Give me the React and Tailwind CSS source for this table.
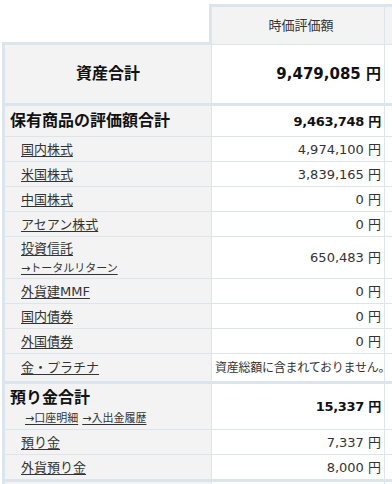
import React from "react";

const B = "border-[#dde5ec]";

function Row({ h, thick, left, right, leftClass = "", rightClass = "" }) {
  return (
    <div
      className={`flex ${h} ${thick ? "border-b-[3px]" : "border-b"} ${B}`}
    >
      <div className={`w-[206px] shrink-0 bg-[#f3f3f3] flex ${leftClass}`}>{left}</div>
      <div className={`w-[173px] shrink-0 border-l ${B} flex ${rightClass}`}>{right}</div>
      <div className={`w-[100px] shrink-0 border-l ${B}`}></div>
    </div>
  );
}

function Item({ label, value, h = "h-[25px]", thick }) {
  return (
    <Row
      h={h}
      thick={thick}
      leftClass="items-center pl-[16px]"
      rightClass="items-center justify-end pr-[3px]"
      left={<span className="text-[13px] text-[#333] underline underline-offset-2">{label}</span>}
      right={<span className="text-[13px] text-[#333]">{value}</span>}
    />
  );
}

export default function App() {
  return (
    <div className="w-[392px] h-[484px] overflow-hidden bg-white font-['DejaVu_Sans','Noto_Sans_CJK_JP',sans-serif] leading-none">
      <div className="w-[600px]">
        {/* header */}
        <div className="flex h-[45px]">
          <div className={`ml-[2px] w-[207px] h-[45px] border-b-[3px] ${B}`}></div>
          <div
            className={`mt-[4px] w-[175px] h-[41px] border-t-[3px] border-l-[3px] border-b ${B} bg-[#f3f3f3] flex items-center justify-center`}
          >
            <span className="text-[13px] text-[#333] pl-[6px]">時価評価額</span>
          </div>
          <div className={`mt-[4px] w-[100px] h-[41px] border-t-[3px] border-l border-b ${B} bg-[#f3f3f3]`}></div>
        </div>

        {/* body */}
        <div className={`ml-[2px] border-l-[3px] ${B}`}>
          <Row
            h="h-[61px]"
            thick
            leftClass="items-center justify-center"
            rightClass="items-center justify-end pr-[3px]"
            left={<span className="text-[16px] font-bold text-[#111]">資産合計</span>}
            right={<span className="text-[15px] font-bold text-[#111]">9,479,085 円</span>}
          />
          <Row
            h="h-[31px]"
            leftClass="items-center pl-[5px]"
            rightClass="items-center justify-end pr-[3px]"
            left={<span className="text-[16px] font-bold text-[#111]">保有商品の評価額合計</span>}
            right={<span className="text-[13px] font-bold text-[#111] tracking-[-0.3px]">9,463,748 円</span>}
          />
          <Item label="国内株式" value="4,974,100 円" />
          <Item label="米国株式" value="3,839,165 円" />
          <Item label="中国株式" value="0 円" />
          <Item label="アセアン株式" value="0 円" />
          <Row
            h="h-[42px]"
            leftClass="flex-col justify-center pl-[16px] gap-[8px]"
            rightClass="items-center justify-end pr-[3px]"
            left={
              <>
                <span className="text-[13px] text-[#333] underline underline-offset-2">投資信託</span>
                <span className="text-[11px] text-[#333] underline underline-offset-2">→トータルリターン</span>
              </>
            }
            right={<span className="text-[13px] text-[#333]">650,483 円</span>}
          />
          <Item label="外貨建MMF" value="0 円" />
          <Item label="国内債券" value="0 円" />
          <Item label="外国債券" value="0 円" />
          <Row
            h="h-[30px]"
            thick
            leftClass="items-center pl-[16px]"
            rightClass="items-center pl-[3px]"
            left={<span className="text-[13px] text-[#333] underline underline-offset-2">金・プラチナ</span>}
            right={
              <span className="text-[12px] text-[#333] whitespace-nowrap tracking-[-0.25px] relative z-10">
                資産総額に含まれておりません。
              </span>
            }
          />
          <Row
            h="h-[46px]"
            leftClass="flex-col justify-center pl-[5px] gap-[7px]"
            rightClass="items-center justify-end pr-[3px]"
            left={
              <>
                <span className="text-[16px] font-bold text-[#111]">預り金合計</span>
                <span className="pl-[15px] flex gap-[4px]">
                  <span className="text-[11px] text-[#333] underline underline-offset-2">→口座明細</span>
                  <span className="text-[11px] text-[#333] underline underline-offset-2">→入出金履歴</span>
                </span>
              </>
            }
            right={<span className="text-[13px] font-bold text-[#111] tracking-[-0.3px]">15,337 円</span>}
          />
          <Item label="預り金" value="7,337 円" />
          <Item label="外貨預り金" value="8,000 円" h="h-[27px]" thick />
          <Row h="h-[30px]" left={null} right={null} />
        </div>
      </div>
    </div>
  );
}
